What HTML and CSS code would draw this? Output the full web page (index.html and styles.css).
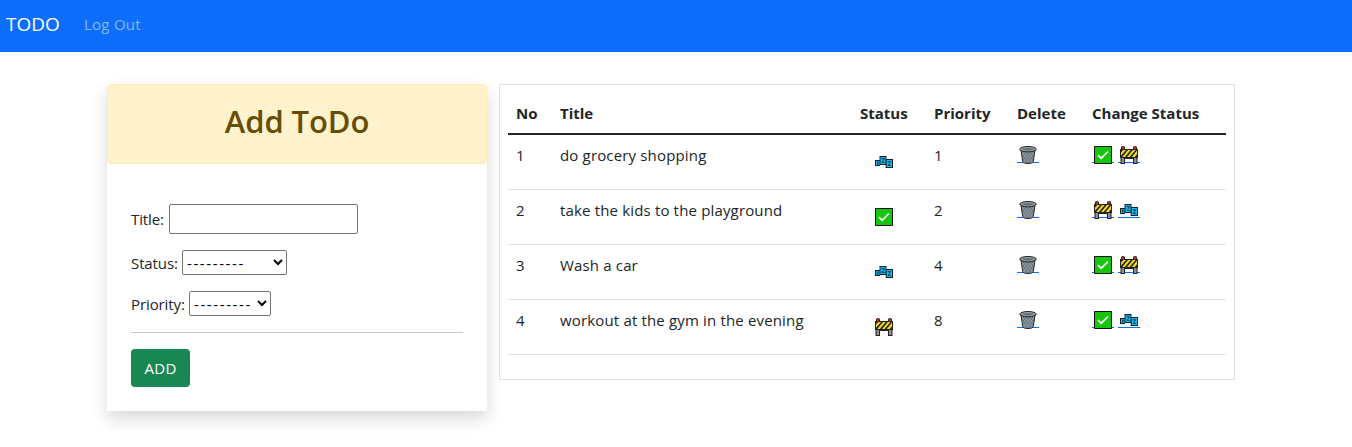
FILE: index.html
```
<!DOCTYPE html>
<html lang="en">
<head>
<meta charset="utf-8">
<title>TODO</title>
<link rel="stylesheet" href="styles.css">
</head>
<body>
<svg class="sprite" width="0" height="0" aria-hidden="true">
  <symbol id="zzz" viewBox="0 0 18 18">
    <path fill="#182026" d="M0 7h4.500V3h7v3H18v9h-7.300v-3H5v1H0z"/>
    <path fill="#12b9f5" d="M1 8h3.500v4H1zM5.500 4h5v7h-5zM11.700 7H17v7h-5.300z"/>
    <path fill="none" stroke="#12303e" stroke-width=".9" d="M2 9h1.500l-1.300 2h1.500M6.500 5.700h3L7 9.400h2.800M12.700 8.700h3l-2.500 3.700H16"/>
  </symbol>
  <symbol id="check" viewBox="0 0 18 18">
    <path fill="#16c60c" stroke="#111" d="M.5.5h17v17H.5z"/>
    <path fill="none" stroke="#fff" stroke-width="1.700" d="M4 9.200l3.200 3.200L14 5.500"/>
  </symbol>
  <symbol id="barrier" viewBox="0 0 18 18">
    <path fill="#222" d="M1 1.500Q1 0 3 0t2 1.500V3h8V1.500Q13 0 15 0t2 1.500V3h1v9h-.5v6H13v-5H5v5H.5v-6H0V3h1z"/>
    <path fill="#b5302b" d="M2 1h2v2.500H2zM14 1h2v2.500h-2z"/>
    <path fill="#8a8f91" d="M1.500 12H4v5H1.500zM14 12h2.500v5H14z"/>
    <path fill="#f0d91a" d="M1 4h16v7H1z"/>
    <path fill="#222" d="M1 4h2.200L1 6.500zM6 4h2L2.200 11H1V9.800zM10.700 4h2.100L7 11H4.900zM15.500 4H17v.600L11.700 11H9.600zM17 8.300V11h-2.200z"/>
  </symbol>
  <symbol id="trash" viewBox="0 0 18 18">
    <path fill="#8d9aa1" stroke="#222" d="M2 4l1.700 11.500Q4.200 17.500 9 17.500t5.300-2L16 4z"/>
    <path fill="none" stroke="#566169" stroke-width=".6" d="M4 6l8 10M7 6l7 8M11 6l4 5M3.500 9l6 8M14 6L6 16M11 6l-7 8M7 6L3.500 11M14.500 9l-5 8"/>
    <ellipse cx="9" cy="3.200" rx="8.200" ry="2.700" fill="#98a4aa" stroke="#222"/>
    <ellipse cx="9" cy="3.300" rx="5.800" ry="1.100" fill="#626d73"/>
  </symbol>
</svg>

<nav class="navbar">
  <a class="brand">TODO</a>
  <a class="logout">Log Out</a>
</nav>

<main class="content">
  <section class="card">
    <h2 class="card-title"><span>Add ToDo</span></h2>
    <form class="form">
      <div class="field field-title"><label for="t">Title:</label><input id="t" type="text"></div>
      <div class="field field-status"><label for="s">Status:</label><select id="s"><option>---------</option></select></div>
      <div class="field field-priority"><label for="p">Priority:</label><select id="p"><option>---------</option></select></div>
      <hr>
      <button class="add" type="button">ADD</button>
    </form>
  </section>

  <section class="list">
    <table>
      <colgroup><col class="c-no"><col class="c-title"><col class="c-status"><col class="c-priority"><col class="c-delete"><col></colgroup>
      <thead><tr><th>No</th><th>Title</th><th>Status</th><th>Priority</th><th>Delete</th><th>Change Status</th></tr></thead>
      <tbody>
        <tr><td>1</td><td class="name">do grocery shopping</td><td class="state"><svg><use href="#zzz"/></svg></td><td>1</td>
          <td class="links"><a><svg><use href="#trash"/></svg></a></td>
          <td class="links"><a><svg><use href="#check"/></svg></a><a><svg><use href="#barrier"/></svg></a></td></tr>
        <tr><td>2</td><td class="name">take the kids to the playground</td><td class="state"><svg><use href="#check"/></svg></td><td>2</td>
          <td class="links"><a><svg><use href="#trash"/></svg></a></td>
          <td class="links"><a><svg><use href="#barrier"/></svg></a><a><svg><use href="#zzz"/></svg></a></td></tr>
        <tr><td>3</td><td class="name">Wash a car</td><td class="state"><svg><use href="#zzz"/></svg></td><td>4</td>
          <td class="links"><a><svg><use href="#trash"/></svg></a></td>
          <td class="links"><a><svg><use href="#check"/></svg></a><a><svg><use href="#barrier"/></svg></a></td></tr>
        <tr><td>4</td><td class="name">workout at the gym in the evening</td><td class="state"><svg><use href="#barrier"/></svg></td><td>8</td>
          <td class="links"><a><svg><use href="#trash"/></svg></a></td>
          <td class="links"><a><svg><use href="#check"/></svg></a><a><svg><use href="#zzz"/></svg></a></td></tr>
      </tbody>
    </table>
  </section>
</main>
</body>
</html>
```
FILE: styles.css
```
* { box-sizing: border-box; }
body { margin: 0; height: 447px; overflow: hidden; background: #fff; color: #212529; font: 15px/24px "Open Sans", "Noto Sans", sans-serif; }
.sprite { display: block; }
.navbar { height: 52px; background: #0d6efd; display: flex; align-items: center; padding: 0 0 4px 6px; }
.brand { width: 78px; color: #fff; font-size: 19px; letter-spacing: 0; }
.logout { color: #86b7fe; letter-spacing: .25px; }
.content { display: flex; align-items: flex-start; gap: 12px; padding: 32px 0 0 107px; }
.card { width: 380px; height: 327px; box-shadow: 0 8px 16px rgba(0,0,0,.15); }
.card-title { margin: 0; height: 80px; border: 1px solid #ffecb5; border-radius: 4px; background: #fff3cd; color: #664d03; font-size: 31px; font-weight: 600; line-height: 38px; padding-top: 17px; text-align: center; letter-spacing: -.1px; }
.form { padding: 40px 24px 0; }
.field { display: flex; align-items: center; justify-content: flex-start; }
.field label { letter-spacing: -.1px; white-space: nowrap; }
.field-title { height: 30px; margin-bottom: 16px; }
.field-title label { width: 38px; }
.field-title input { width: 189px; height: 30px; border: 1px solid #767676; border-radius: 2px; padding: 1px 2px; }
.field-status { height: 25px; margin-bottom: 16px; }
.field-status label { width: 51px; }
.field-priority { height: 25px; margin-bottom: 16px; }
.field-priority label { width: 58px; }
select { height: 25px; border: 1px solid #767676; border-radius: 2px; background: #fff; color: #000; font: 15px "Open Sans", sans-serif; letter-spacing: 1.6px; padding: 0; }
.field-status select { width: 105px; }
.field-priority select { width: 82px; }
hr { height: 1px; margin: 0 0 16px; border: 0; background: #c8c9ca; }
.add { width: 59px; height: 38px; border: 0; border-radius: 4px; background: #198754; color: #fff; font: 15px/24px "Open Sans", sans-serif; letter-spacing: .3px; padding: 0 0 1px; }
.list { width: 736px; height: 296px; border: 1px solid #dee2e6; padding: 8px; }
table { width: 718px; border-spacing: 0; table-layout: fixed; }
.c-no { width: 44px; }
.c-title { width: 300px; }
.c-status { width: 74px; }
.c-priority { width: 83px; }
.c-delete { width: 75px; }
th { height: 42px; padding: 8px 8px 8px; border-bottom: 2px solid #212529; text-align: left; font-weight: 700; white-space: nowrap; letter-spacing: 0; }
td { height: 55px; padding: 8px; border-bottom: 1px solid #dee2e6; vertical-align: top; white-space: nowrap; }
.name { letter-spacing: .16px; }
td svg { display: block; width: 18px; height: 18px; }
.state { padding: 18px 0 0 23px; }
.links { padding: 11px 0 0 8px; font-size: 0; }
.links a { display: inline-block; width: 22px; margin-right: 4px; padding: 0 2px; background: linear-gradient(#0d6efd, #0d6efd) 0 16px / 22px 1px no-repeat; }
```
